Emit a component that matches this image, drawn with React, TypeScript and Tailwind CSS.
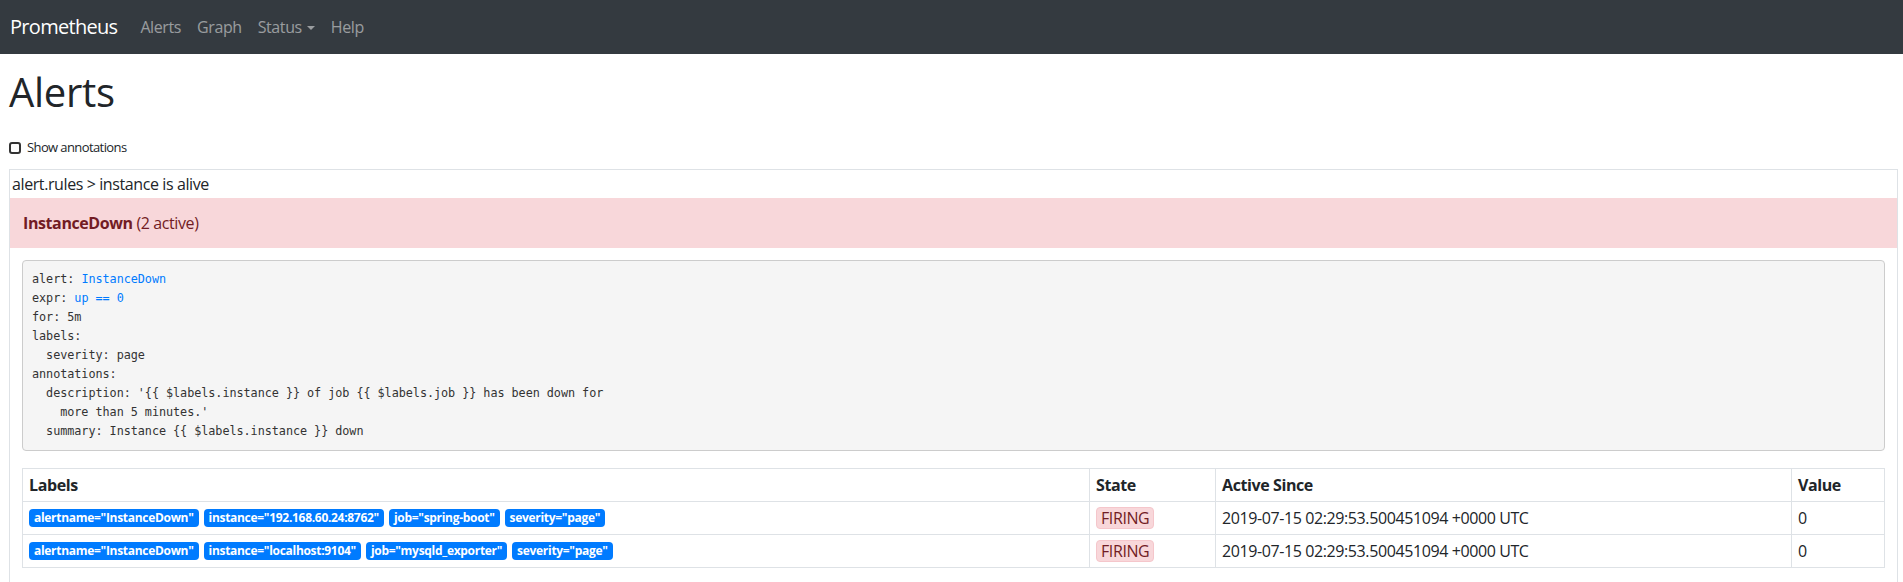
const rows = [
  {
    labels: ['alertname="InstanceDown"', 'instance="192.168.60.24:8762"', 'job="spring-boot"', 'severity="page"'],
    state: "FIRING",
    since: "2019-07-15 02:29:53.500451094 +0000 UTC",
    value: "0",
  },
  {
    labels: ['alertname="InstanceDown"', 'instance="localhost:9104"', 'job="mysqld_exporter"', 'severity="page"'],
    state: "FIRING",
    since: "2019-07-15 02:29:53.500451094 +0000 UTC",
    value: "0",
  },
];

function NavBar() {
  return (
    <nav className="flex h-[54px] items-center bg-[#343a40] pl-[10px]">
      <a className="mr-[15px] text-[20px] leading-[30px] tracking-[-0.7px] text-white">Prometheus</a>
      <ul className="flex text-[16px] leading-[24px] text-white/50">
        <li className="px-[8px]">Alerts</li>
        <li className="px-[8px]">Graph</li>
        <li className="flex items-center px-[8px]">
          Status
          <span className="ml-[5px] mt-[2px] h-0 w-0 border-x-[4.8px] border-t-[4.8px] border-x-transparent border-t-white/50" />
        </li>
        <li className="px-[8px]">Help</li>
      </ul>
    </nav>
  );
}

function RuleDef() {
  return (
    <pre className="rounded-[4px] border border-[#ccc] bg-[#f5f5f5] p-[9px] font-['DejaVu_Sans_Mono',monospace] text-[11.8px] leading-[19px] tracking-[-0.05px] text-[#333]">
      {"alert: "}
      <span className="text-[#007bff]">InstanceDown</span>
      {"\nexpr: "}
      <span className="text-[#007bff]">up == 0</span>
      {"\nfor: 5m\nlabels:\n  severity: page\nannotations:\n  description: '{{ $labels.instance }} of job {{ $labels.job }} has been down for\n    more than 5 minutes.'\n  summary: Instance {{ $labels.instance }} down"}
    </pre>
  );
}

function AlertTable() {
  return (
    <table className="mt-[17px] w-full table-fixed border-collapse text-left">
      <colgroup>
        <col className="w-[1067px]" />
        <col className="w-[126px]" />
        <col className="w-[576px]" />
        <col />
      </colgroup>
      <thead>
        <tr>
          <th className="border border-[#dee2e6] px-[6px] py-[4px] leading-[24px] font-bold">Labels</th>
          <th className="border border-[#dee2e6] px-[6px] py-[4px] leading-[24px] font-bold">State</th>
          <th className="border border-[#dee2e6] px-[6px] py-[4px] leading-[24px] font-bold">Active Since</th>
          <th className="border border-[#dee2e6] px-[6px] py-[4px] leading-[24px] font-bold">Value</th>
        </tr>
      </thead>
      <tbody>
        {rows.map((r, i) => (
          <tr key={i}>
            <td className="border border-[#dee2e6] px-[6px] py-[4px] leading-[24px]">
              <div className="flex h-[24px] items-center gap-[5px]">
                {r.labels.map((l) => (
                  <span
                    key={l}
                    className="rounded-[4px] bg-[#007bff] px-[5px] py-[3px] text-[12px] font-bold leading-[12px] tracking-[-0.3px] text-white"
                  >
                    {l}
                  </span>
                ))}
              </div>
            </td>
            <td className="border border-[#dee2e6] px-[6px] py-[4px] leading-[24px]">
              <div className="flex h-[24px] items-center">
                <span className="rounded-[4px] border border-[#f5c6cb] bg-[#f8d7da] px-[4px] leading-[20px] text-[#721c24]">
                  {r.state}
                </span>
              </div>
            </td>
            <td className="border border-[#dee2e6] px-[6px] py-[4px] leading-[24px]">{r.since}</td>
            <td className="border border-[#dee2e6] px-[6px] py-[4px] leading-[24px]">{r.value}</td>
          </tr>
        ))}
      </tbody>
    </table>
  );
}

export default function App() {
  return (
    <div className="h-[582px] overflow-hidden bg-white font-['Open_Sans',sans-serif] text-[16px] tracking-[-0.4px] text-[#212529]">
      <NavBar />
      <div className="pl-[9px] pr-[5px]">
        <h1 className="mt-[14px] text-[40px] leading-[48px] font-medium tracking-[-0.3px]">Alerts</h1>
        <label className="mt-[22px] flex h-[20px] items-center gap-[6px] text-[13px] tracking-[-0.6px]">
          <span className="h-[12px] w-[12px] rounded-[3px] border-2 border-[#333]" />
          Show annotations
        </label>
        <div className="mt-[11px] border border-[#dee2e6] pb-[30px]">
          <div className="px-[2px] py-[2px] leading-[24px]">alert.rules &gt; instance is alive</div>
          <div className="bg-[#f8d7da] px-[13px] py-[13px] leading-[24px] text-[#721c24]">
            <span className="font-bold">InstanceDown</span> (2 active)
          </div>
          <div className="px-[12px] pt-[12px]">
            <RuleDef />
            <AlertTable />
          </div>
        </div>
      </div>
    </div>
  );
}
